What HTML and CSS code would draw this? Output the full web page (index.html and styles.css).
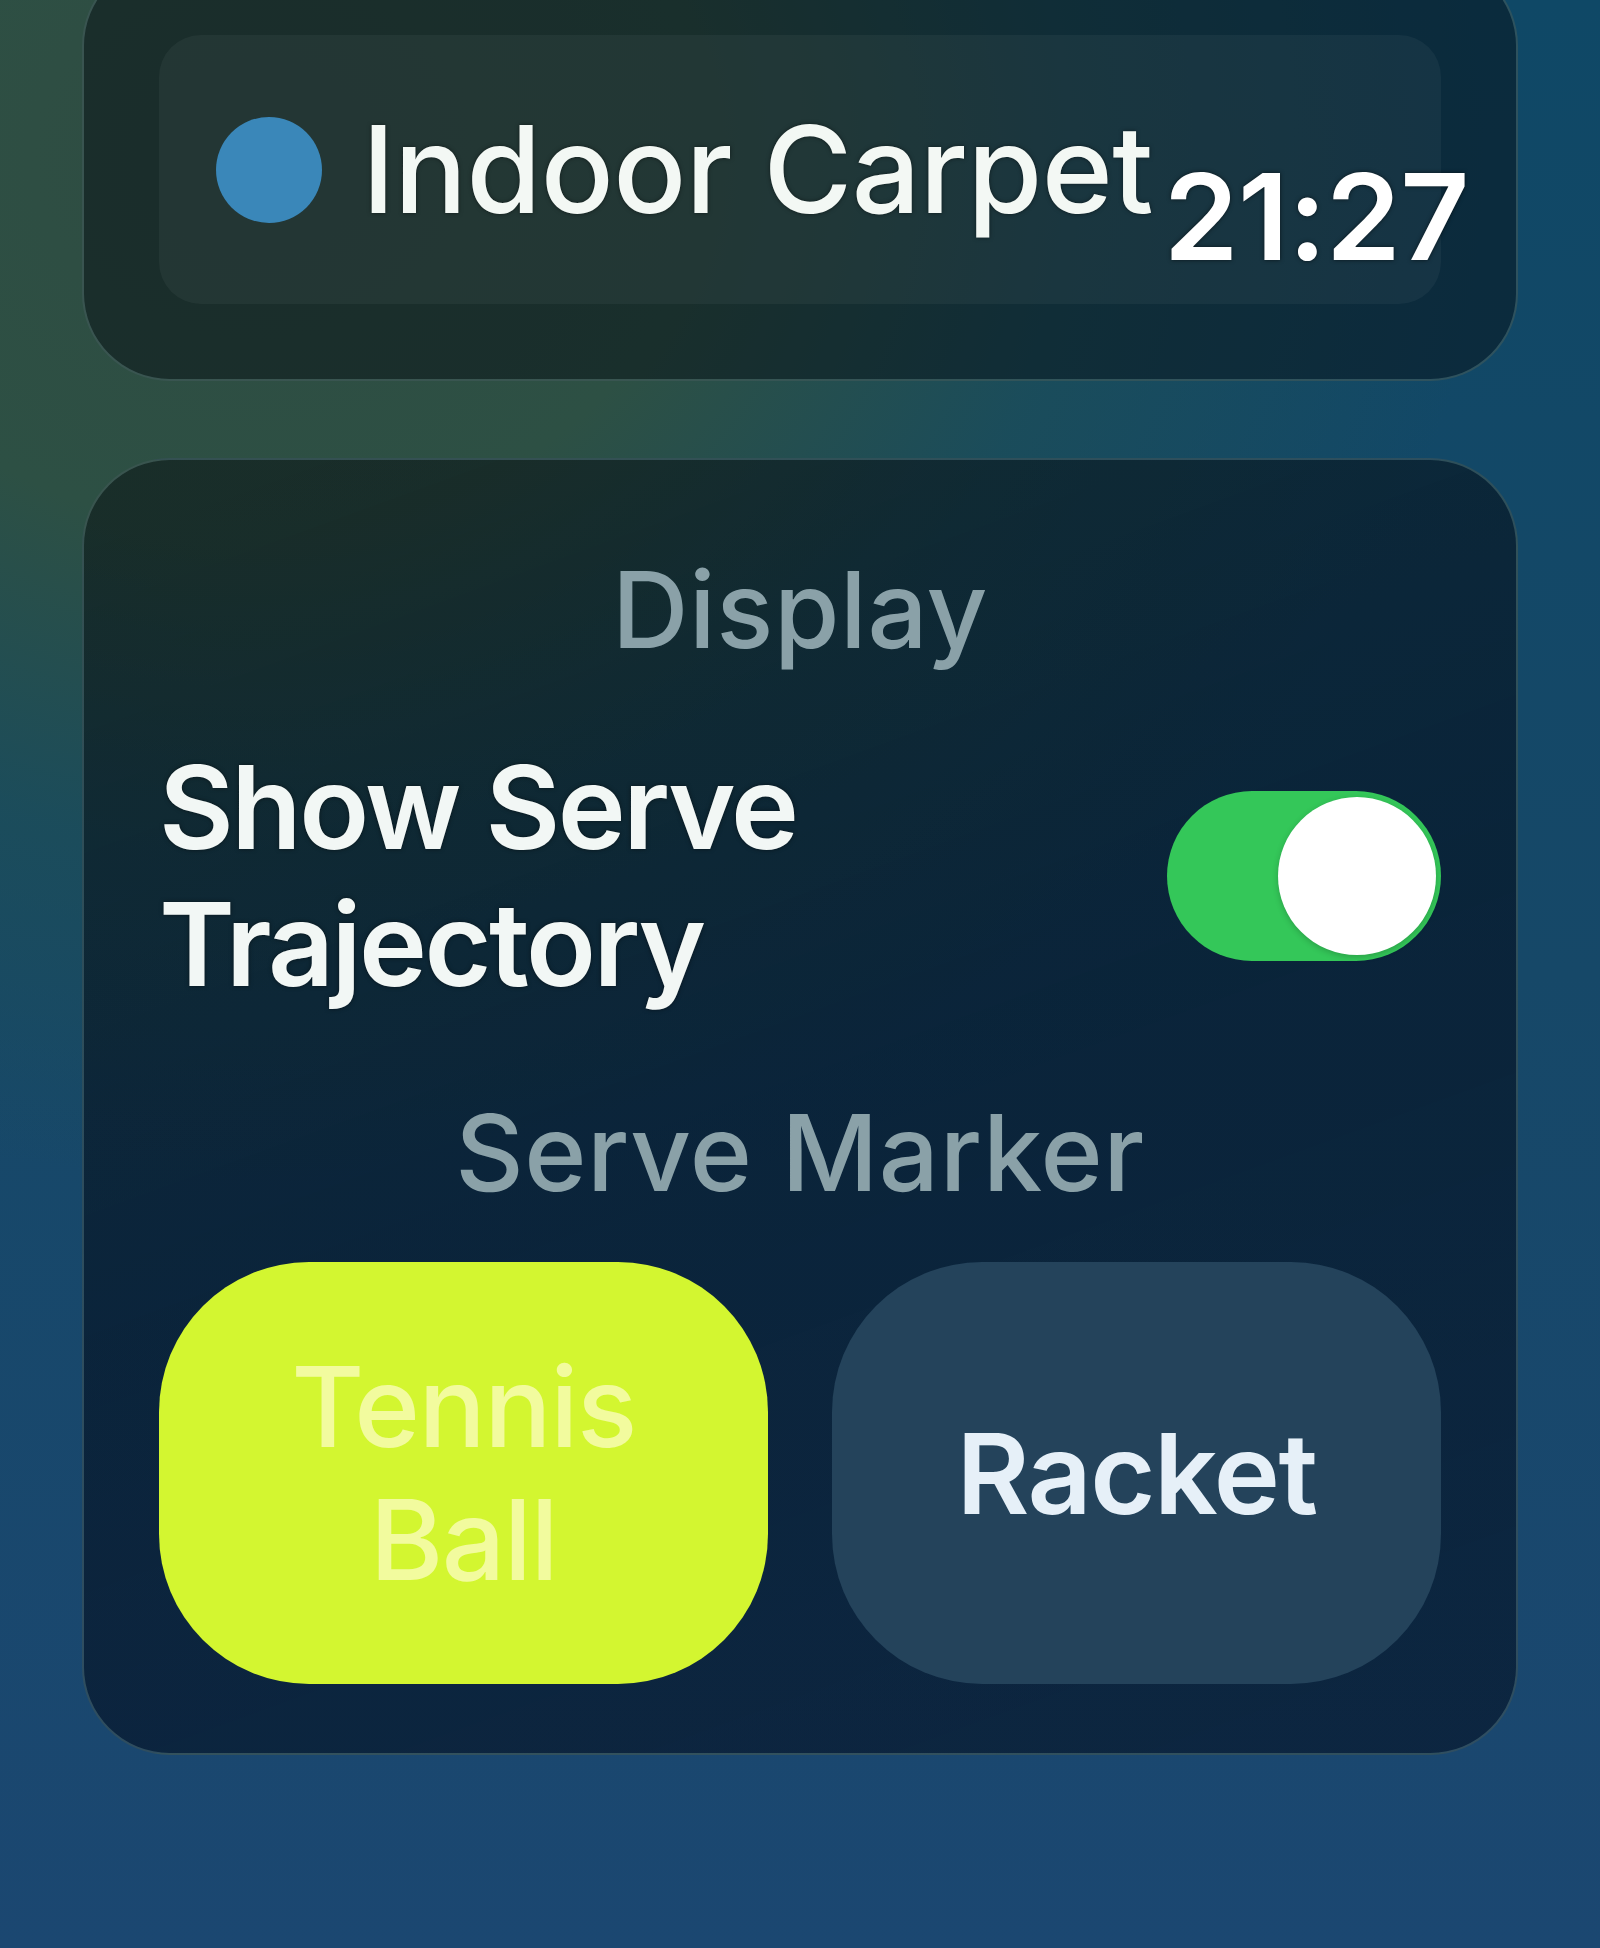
FILE: index.html
```html
<!DOCTYPE html>
<html lang="en">
<head>
<meta charset="utf-8">
<title>Serve Settings</title>
<link rel="stylesheet" href="styles.css">
</head>
<body>
<div class="screen">
  <div class="scroll">
    <section class="card card-surface">
      <div class="surface-row">
        <span class="dot"></span>
        <span class="surface-name">Indoor Carpet</span>
      </div>
    </section>
    <section class="card card-display">
      <h2 class="section-title">Display</h2>
      <div class="toggle-row">
        <span class="toggle-label">Show Serve Trajectory</span>
        <span class="toggle on"><span class="knob"></span></span>
      </div>
      <h2 class="section-title title-marker">Serve Marker</h2>
      <div class="segmented">
        <button class="seg seg-active">Tennis Ball</button>
        <button class="seg">Racket</button>
      </div>
    </section>
  </div>
  <div class="clock">21:27</div>
</div>
</body>
</html>
```
FILE: styles.css
```css
* { box-sizing: border-box; }
html, body { margin: 0; padding: 0; }
body {
  width: 1600px;
  height: 1948px;
  overflow: hidden;
  font-family: Inter, "Noto Sans", "Liberation Sans", sans-serif;
  color: #f4f8f6;
  background:
    radial-gradient(ellipse 1500px 1250px at 16% 8%, #2f4c42 0%, #2d5044 30%, rgba(30, 78, 86, 0.7) 55%, rgba(20, 70, 100, 0) 82%),
    linear-gradient(180deg, #0f4866 0%, #164868 50%, #1b4771 100%);
}
.screen { position: relative; width: 1600px; height: 1948px; }
.scroll {
  display: flex;
  flex-direction: column;
  gap: 77px;
  padding: 0 82px;
}
.card {
  border: 2px solid rgba(160, 210, 200, 0.24);
  border-radius: 88px;
  background: rgba(6, 14, 20, 0.5);
  padding: 0 75px;
}
.card-surface {
  margin-top: -42px;
  padding-top: 75px;
  padding-bottom: 75px;
}
.surface-row {
  height: 269px;
  border-radius: 42px;
  background: rgba(255, 255, 255, 0.045);
  display: flex;
  align-items: center;
  padding-left: 57px;
  gap: 40px;
}
.dot {
  width: 106px;
  height: 106px;
  border-radius: 50%;
  background: #3a87b9;
  flex: none;
}
.surface-name {
  font-size: 121px;
  font-weight: 500;
  line-height: 1;
  letter-spacing: -0.6px;
  color: #f3f8f4;
  text-shadow: 0 0 4px rgba(0, 0, 0, 0.5);
}
.card-display {
  padding-top: 86px;
  padding-bottom: 69px;
  background: linear-gradient(160deg, rgba(12, 22, 22, 0.58) 0%, rgba(4, 16, 32, 0.64) 50%, rgba(4, 16, 34, 0.6) 100%);
}
.section-title {
  margin: 0;
  text-align: center;
  font-size: 106px;
  font-weight: 500;
  line-height: 1.2;
  color: #8aa1a8;
  letter-spacing: 0.6px;
}
.title-marker { margin-top: 76px; }
.toggle-row {
  margin-top: 66px;
  display: flex;
  align-items: center;
  justify-content: space-between;
  gap: 40px;
}
.toggle-label {
  flex: 1;
  font-size: 115px;
  font-weight: 600;
  line-height: 137px;
  letter-spacing: -2.5px;
  color: #f2f7f5;
  text-shadow: 0 0 4px rgba(0, 0, 0, 0.5);
}
.toggle {
  flex: none;
  width: 274px;
  height: 170px;
  border-radius: 85px;
  background: #34c759;
  display: flex;
  align-items: center;
  justify-content: flex-end;
  padding: 0 5px;
}
.knob {
  width: 158px;
  height: 158px;
  border-radius: 50%;
  background: #ffffff;
  box-shadow: 0 2px 6px rgba(0, 0, 0, 0.2);
}
.segmented {
  margin-top: 46px;
  display: grid;
  grid-template-columns: 1fr 1fr;
  gap: 64px;
}
.seg {
  height: 422px;
  border: none;
  border-radius: 150px;
  background: #24435b;
  font-family: Inter, "Noto Sans", "Liberation Sans", sans-serif;
  font-size: 112px;
  font-weight: 600;
  line-height: 133px;
  letter-spacing: -1.5px;
  color: #e6f0f8;
  padding: 0 90px;
  text-align: center;
}
.seg-active {
  background: #d3f630;
  color: #f2fb9e;
  font-weight: 500;
}
.clock {
  position: absolute;
  top: 157px;
  right: 131px;
  font-size: 120px;
  font-weight: 600;
  line-height: 1;
  letter-spacing: -0.5px;
  color: #ffffff;
  text-shadow: 0 0 4px rgba(0, 0, 0, 0.6);
}
```
